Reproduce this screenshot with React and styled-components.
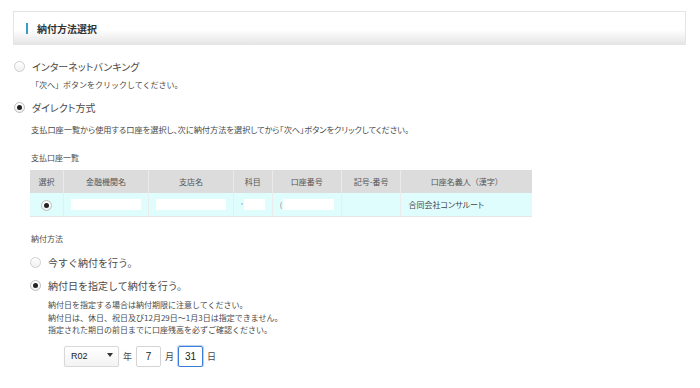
import React from 'react';
import styled, { createGlobalStyle, css } from 'styled-components';

const GlobalStyle = createGlobalStyle`
  body {
    margin: 0;
    background: #ffffff;
    font-family: "Noto Sans CJK JP", "Noto Sans", sans-serif;
    color: #4a4a4a;
  }
`;

const Page = styled.div`
  padding: 11px 14px 0 13px;
`;

const SectionHeader = styled.div`
  display: flex;
  align-items: center;
  height: 34px;
  box-sizing: border-box;
  padding-left: 12px;
  border: 1px solid #e4e4e4;
  background: linear-gradient(#ffffff 55%, #e6e6e6);
`;

const HeaderBar = styled.span`
  width: 2px;
  height: 11px;
  background: #3b9ccc;
  margin-right: 9px;
`;

const HeaderTitle = styled.h2`
  margin: 0;
  font-size: 10px;
  font-weight: bold;
  color: #333333;
`;

const Option = styled.label`
  display: flex;
  align-items: center;
  gap: 7px;
  font-size: 10px;
  color: #4a4a4a;
  margin-top: ${({ top }) => top}px;
  margin-left: ${({ indent }) => indent || 1}px;
  height: 12px;
  font-feature-settings: ${({ proportional }) => (proportional ? '"palt"' : 'normal')};
`;

const RadioDot = styled.span`
  width: 11px;
  height: 11px;
  box-sizing: border-box;
  border-radius: 50%;
  border: 1px solid #cfcfcf;
  background: linear-gradient(#ffffff, #f1f1f1);
  display: inline-flex;
  align-items: center;
  justify-content: center;
  vertical-align: middle;
  flex-shrink: 0;

  ${({ checked }) =>
    checked && css`
      border-color: #bdbdbd;
      &::after {
        content: '';
        width: 5px;
        height: 5px;
        border-radius: 50%;
        background: #222222;
      }
    `}
`;

const Note = styled.p`
  margin: ${({ top }) => top}px 0 0 ${({ indent }) => indent}px;
  font-size: ${({ size }) => size || 8}px;
  line-height: 12.5px;
  color: #4a4a4a;
  font-feature-settings: ${({ proportional }) => (proportional ? '"palt"' : 'normal')};
`;

const SubTitle = styled.div`
  margin: ${({ top }) => top}px 0 0 18px;
  font-size: 8px;
  color: #4a4a4a;
`;

const Table = styled.table`
  margin: 7px 0 0 17px;
  width: 502px;
  border-collapse: collapse;
  font-size: 8px;
`;

const Th = styled.th`
  height: 23px;
  background: #dcdcdc;
  color: #555555;
  font-weight: normal;
  border-left: 1px solid #eaeaea;
  width: ${({ w }) => w}px;
  padding: 0;
  &:first-child {
    border-left: none;
  }
`;

const Td = styled.td`
  height: 23px;
  background: #e0fdfe;
  border-left: 1px solid #ececec;
  border-bottom: 1px solid #e6e6e6;
  padding: 0 7px;
  text-align: ${({ align }) => align || 'left'};
  font-size: 8px;
  font-feature-settings: "palt";
  color: #444444;
  &:first-child {
    border-left: none;
  }
`;

const Masked = styled.span`
  display: block;
  flex: 1;
  height: 11px;
  background: #ffffff;
`;

const MaskWrap = styled.div`
  display: flex;
  align-items: center;
  gap: 1px;
  color: #777777;
  font-size: 7px;
`;

const DateRow = styled.div`
  display: flex;
  align-items: center;
  gap: 4px;
  margin: 9px 0 0 51px;
  font-size: 9px;
  color: #4a4a4a;
`;

const Select = styled.div`
  width: 55px;
  height: 21px;
  box-sizing: border-box;
  border: 1px solid #d8d8d8;
  border-radius: 2px;
  background: linear-gradient(#ffffff, #f3f3f3);
  box-shadow: 0 1px 1px rgba(0, 0, 0, 0.12);
  display: flex;
  align-items: center;
  justify-content: space-between;
  padding: 0 5px 0 6px;
  font-family: "Liberation Sans", Arial, sans-serif;
  font-size: 9px;
  color: #222222;
`;

const Caret = styled.span`
  width: 0;
  height: 0;
  border-left: 3px solid transparent;
  border-right: 3px solid transparent;
  border-top: 4px solid #333333;
  margin-top: -2px;
`;

const NumInput = styled.div`
  width: 25px;
  height: 21px;
  box-sizing: border-box;
  border: 1px solid ${({ focused }) => (focused ? '#3b7dd8' : '#d4d4d4')};
  border-radius: 2px;
  box-shadow: ${({ focused }) => (focused ? '0 0 0 1px rgba(59, 125, 216, 0.35)' : 'none')};
  display: flex;
  align-items: center;
  justify-content: center;
  font-family: "Liberation Sans", Arial, sans-serif;
  font-size: 10px;
  color: #222222;
`;

const columns = [
  { label: '選択', w: 33 },
  { label: '金融機関名', w: 85 },
  { label: '支店名', w: 85 },
  { label: '科目', w: 38 },
  { label: '口座番号', w: 69 },
  { label: '記号-番号', w: 59 },
  { label: '口座名義人（漢字）', w: 132 },
];

const App = () => (
  <>
    <GlobalStyle />
    <Page>
      <SectionHeader>
        <HeaderBar />
        <HeaderTitle>納付方法選択</HeaderTitle>
      </SectionHeader>

      <Option top={15} proportional>
        <RadioDot />
        インターネットバンキング
      </Option>
      <Note top={7} indent={18}>「次へ」ボタンをクリックしてください。</Note>

      <Option top={10} proportional>
        <RadioDot checked />
        ダイレクト方式
      </Option>
      <Note top={9} indent={18} size={8.2} proportional>
        支払口座一覧から使用する口座を選択し、次に納付方法を選択してから「次へ」ボタンをクリックしてください。
      </Note>

      <SubTitle top={17}>支払口座一覧</SubTitle>
      <Table>
        <thead>
          <tr>
            {columns.map((c) => (
              <Th key={c.label} w={c.w}>{c.label}</Th>
            ))}
          </tr>
        </thead>
        <tbody>
          <tr>
            <Td align="center">
              <RadioDot checked />
            </Td>
            <Td><Masked /></Td>
            <Td><Masked /></Td>
            <Td>
              <MaskWrap>'<Masked /></MaskWrap>
            </Td>
            <Td>
              <MaskWrap>(<Masked /></MaskWrap>
            </Td>
            <Td />
            <Td>合同会社コンサルート</Td>
          </tr>
        </tbody>
      </Table>

      <SubTitle top={16}>納付方法</SubTitle>

      <Option top={12} indent={17}>
        <RadioDot />
        今すぐ納付を行う。
      </Option>
      <Option top={11} indent={17}>
        <RadioDot checked />
        納付日を指定して納付を行う。
      </Option>
      <Note top={8} indent={35}>
        納付日を指定する場合は納付期限に注意してください。
        <br />
        納付日は、休日、祝日及び12月29日〜1月3日は指定できません。
        <br />
        指定された期日の前日までに口座残高を必ずご確認ください。
      </Note>

      <DateRow>
        <Select>
          R02
          <Caret />
        </Select>
        年
        <NumInput>7</NumInput>
        月
        <NumInput focused>31</NumInput>
        日
      </DateRow>
    </Page>
  </>
);

export default App;
